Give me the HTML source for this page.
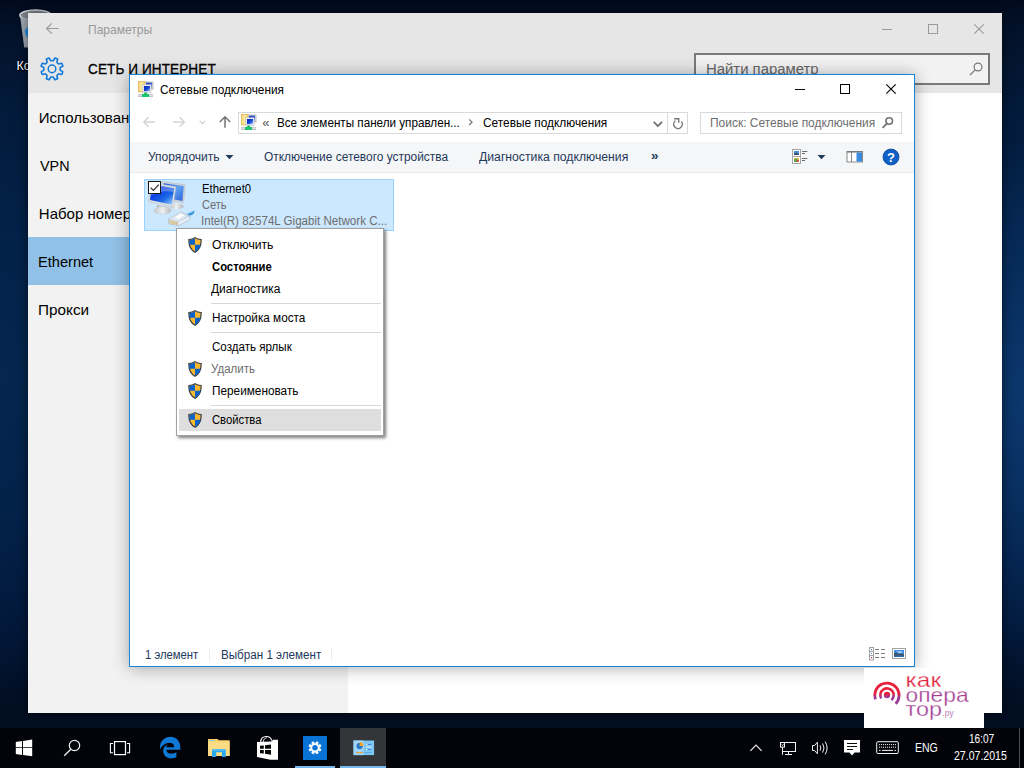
<!DOCTYPE html>
<html lang="ru">
<head>
<meta charset="utf-8">
<title>Сетевые подключения</title>
<style>
html,body{margin:0;padding:0;}
body{width:1024px;height:768px;overflow:hidden;position:relative;background:#071428;font-family:"Liberation Sans",sans-serif;color:#000;}
.abs{position:absolute;}
.abs,.t12,.navt,.mi,#sbox span{transform-origin:0 0;}
#desk{left:0;top:0;width:1024px;height:728px;background:radial-gradient(ellipse 160px 260px at 1024px 400px,rgba(18,70,135,.55),rgba(18,70,135,0) 100%),linear-gradient(180deg,#020b1d 0%,#03122a 4%,#031b3c 16%,#03224a 34%,#04264f 52%,#03224a 70%,#02183a 86%,#020e22 97%,#020e22 100%);}
/* settings window */
#set{left:28px;top:13px;width:974px;height:700px;background:#fff;box-shadow:0 1px 10px rgba(0,0,0,.55);}
#set .hdr{left:0;top:0;width:974px;height:80px;background:#e6e6e6;}
#set .nav{left:0;top:80px;width:320px;height:620px;background:#f2f2f2;}
#set .navsel{left:0;top:224px;width:320px;height:48px;background:#91c1e7;}
.navt{position:absolute;left:11px;font-size:15px;color:#000;white-space:nowrap;}
#set .ttl{left:60px;top:9px;font-size:13px;color:#999;}
#set .big{left:59px;top:47px;font-size:15.5px;color:#000;letter-spacing:0.1px;-webkit-text-stroke:0.3px #000;}
#sbox{left:666px;top:40px;width:292px;height:28px;border:2px solid #7a7a7a;background:#f2f2f2;}
#sbox span{position:absolute;left:9px;top:5px;font-size:15.5px;color:#666;}
/* explorer */
#exp{left:129px;top:74px;width:784px;height:591px;background:#fff;border:1px solid #1883d7;box-shadow:0 1px 16px rgba(0,0,0,.33);}
#exp .tb{left:0;top:67px;width:784px;height:30px;background:#f5f6f7;}
#exp .tbl{left:0;top:97px;width:784px;height:1px;background:#e8e9ea;}
.t12{position:absolute;font-size:12px;white-space:nowrap;}
#addr{left:108px;top:37px;width:448px;height:20px;border:1px solid #d9d9d9;background:#fff;}
#srch{left:570px;top:37px;width:200px;height:20px;border:1px solid #d9d9d9;background:#fff;}
#item{left:14px;top:104px;width:248px;height:50px;background:#cce8ff;border:1px solid #99d1ff;}
/* menu */
#menu{left:176px;top:228px;width:206px;height:206px;background:#fff;border:1px solid #a0a0a0;box-shadow:2px 2px 3px rgba(0,0,0,.5);}
#menu .mi{position:absolute;left:34px;font-size:12px;white-space:nowrap;}
#menu .sep{position:absolute;left:34px;width:170px;height:1px;background:#d7d7d7;}
#menu .hl{position:absolute;left:2px;top:180px;width:202px;height:22px;background:#dedede;}
/* taskbar */
.tray{font-size:12px;color:#fff;white-space:nowrap;transform-origin:0 0;}
#wm{left:864px;top:668px;width:120px;height:60px;background:#fff;}
#task{left:0;top:728px;width:1024px;height:40px;background:#030409;}
</style>
</head>
<body>

<svg width="0" height="0" style="position:absolute">
  <defs>
    <symbol id="shield" viewBox="0 0 14 16">
      <path d="M7 0.6 C5.2 1.9 3 2.4 0.9 2.5 C0.6 8 2.2 12.3 7 15.3 C11.8 12.3 13.4 8 13.1 2.5 C11 2.4 8.8 1.9 7 0.6 Z" fill="#fdb72d" stroke="#323843" stroke-width="1.15"/>
      <path d="M7 1.2 C5.3 2.3 3.3 2.8 1.4 2.95 L1.4 7.8 L7 7.8 Z" fill="#0b62c8"/>
      <path d="M7 7.8 L12.55 7.8 C12.1 10.7 10.3 13 7 14.7 Z" fill="#0b62c8"/>
    </symbol>
    <linearGradient id="scr" x1="0" y1="0" x2="1" y2="1">
      <stop offset="0" stop-color="#0a20c0"/><stop offset="0.55" stop-color="#1648d8"/><stop offset="1" stop-color="#a8d0f8"/>
    </linearGradient>
    <linearGradient id="fold" x1="0" y1="0" x2="1" y2="0">
      <stop offset="0" stop-color="#f3d57a"/><stop offset="0.5" stop-color="#fbe9a6"/><stop offset="1" stop-color="#e9c25a"/>
    </linearGradient>
    <symbol id="netc" viewBox="0 0 16 16">
      <rect x="0.3" y="0.3" width="7.2" height="10.6" fill="url(#fold)" stroke="#dcae45" stroke-width="0.7"/>
      <rect x="7" y="0.5" width="8.6" height="8.2" fill="#c9c9c9"/>
      <rect x="8" y="1.6" width="6" height="6" fill="url(#scr)" opacity="0.8"/>
      <rect x="4.8" y="3.8" width="8.2" height="8" fill="#ececec" stroke="#bdbdbd" stroke-width="0.5"/>
      <rect x="6" y="5" width="6" height="5.2" fill="url(#scr)"/>
      <rect x="0" y="13.2" width="15" height="2.8" fill="#d9dce2"/>
      <rect x="0" y="13.2" width="15" height="0.6" fill="#bcbcbc"/>
      <rect x="0" y="15.4" width="15" height="0.6" fill="#b3b3b3"/>
      <rect x="6.2" y="11.6" width="2.8" height="2" fill="#15b862"/>
      <rect x="4" y="13" width="7" height="3" fill="#1cc56c"/>
    </symbol>
  </defs>
</svg>
<div id="desk" class="abs"></div>


<svg class="abs" style="left:0;top:0" width="64" height="80" viewBox="0 0 64 80">
  <path d="M20 15.6 L24.2 47.4 L46 47.4 L50 15.6 Z" fill="#98a0aa"/>
  <ellipse cx="35.5" cy="15.2" rx="15.6" ry="5.2" fill="#7d838a" stroke="#cdd1d6" stroke-width="1.6"/>
  <path d="M21.2 18 L25 46.6 L28.4 46.6 L28.4 18.6 Z" fill="#a4abb5"/>
  <path d="M24.6 30.4 L28.2 26.2 V38 L25.8 35.4 Z" fill="#2c8fe0"/>
</svg>
<div class="abs" style="left:16.5px;top:59px;font-size:12.5px;color:#fff;text-shadow:0 1px 2px #000,1px 1px 1px #000;white-space:nowrap;">Корзина</div>

<div id="set" class="abs">
  <div class="hdr abs"></div>
  <div class="nav abs"></div>
  <div class="navsel abs"></div>
  <div class="ttl abs" style="left:59.57px;transform:scaleX(0.9256)">Параметры</div>
  <div class="big abs" style="left:59.6px;transform:scaleX(0.8756)">СЕТЬ И ИНТЕРНЕТ</div>
  <div id="sbox" class="abs"><span style="left:10px;transform:scaleX(0.9598)">Найти параметр</span></div>

  <svg class="abs" style="left:-28px;top:-13px" width="1024" height="768" viewBox="0 0 1024 768">
    <!-- back arrow -->
    <path d="M58.5 28.5 H46.8 M51.8 23.3 L46.6 28.5 L51.8 33.7" fill="none" stroke="#9a9a9a" stroke-width="1.2"/>
    <!-- gear -->
    <path d="M53.21 60.79 L54.92 57.99 L57.65 59.11 L56.88 62.31 L58.59 64.02 L61.79 63.25 L62.91 65.98 L60.11 67.69 L60.11 70.11 L62.91 71.82 L61.79 74.55 L58.59 73.78 L56.88 75.49 L57.65 78.69 L54.92 79.81 L53.21 77.01 L50.79 77.01 L49.08 79.81 L46.35 78.69 L47.12 75.49 L45.41 73.78 L42.21 74.55 L41.09 71.82 L43.89 70.11 L43.89 67.69 L41.09 65.98 L42.21 63.25 L45.41 64.02 L47.12 62.31 L46.35 59.11 L49.08 57.99 L50.79 60.79 Z" fill="none" stroke="#1079d9" stroke-width="1.6" stroke-linejoin="round"/>
    <circle cx="52" cy="68.9" r="3.8" fill="none" stroke="#1079d9" stroke-width="1.5"/>
    <!-- window controls -->
    <path d="M882 29.5 H892" stroke="#9a9a9a" stroke-width="1"/>
    <rect x="928.5" y="24.5" width="9" height="9" fill="none" stroke="#9a9a9a" stroke-width="1"/>
    <path d="M974.3 24.3 L983.7 33.7 M983.7 24.3 L974.3 33.7" stroke="#9a9a9a" stroke-width="1.1"/>
    <!-- search magnifier -->
    <circle cx="978" cy="67" r="3.9" fill="none" stroke="#777" stroke-width="1.2"/>
    <path d="M975.2 69.8 L970 75" stroke="#777" stroke-width="1.2"/>
  </svg>
  <div class="navt" style="left:10.8px;top:96px;transform:scaleX(1)">Использование данных</div>
  <div class="navt" style="left:11.9px;top:144px;transform:scaleX(0.9564)">VPN</div>
  <div class="navt" style="left:10.8px;top:192px;transform:scaleX(1)">Набор номера</div>
  <div class="navt" style="left:10.28px;top:240px;transform:scaleX(0.9728)">Ethernet</div>
  <div class="navt" style="left:10.22px;top:288px;transform:scaleX(1.02)">Прокси</div>
</div>

<div id="exp" class="abs">
  <div class="tb abs"></div><div class="tbl abs"></div>
  <div class="t12" style="left:30.0px;top:8px;transform:scaleX(0.9858)">Сетевые подключения</div>
  <div id="addr" class="abs">
    <div class="t12" style="left:23.2px;top:2px;font-size:13px;color:#555;">«</div>
    <div class="t12" style="left:37.75px;top:3px;transform:scaleX(0.9729)">Все элементы панели управлен...</div>
    <div class="t12" style="left:243.5px;top:3px;transform:scaleX(0.9878)">Сетевые подключения</div>
  </div>
  <div id="srch" class="abs"><div class="t12" style="left:8.6px;top:3px;color:#6d6d6d;transform:scaleX(0.997)">Поиск: Сетевые подключения</div></div>
  <div class="t12" style="left:18.4px;top:75px;color:#1e395b;transform:scaleX(1.002)">Упорядочить</div>
  <div class="t12" style="left:134.4px;top:75px;color:#1e395b;transform:scaleX(0.9927)">Отключение сетевого устройства</div>
  <div class="t12" style="left:348.75px;top:75px;color:#1e395b;transform:scaleX(1.0175)">Диагностика подключения</div>
  <div class="t12" style="left:521px;top:72.5px;color:#1e395b;font-size:13.5px;font-weight:bold;">»</div>
  <div id="item" class="abs"></div>
  <svg class="abs" style="left:-130px;top:-75px" width="1024" height="768" viewBox="0 0 1024 768">
    <!-- title icon -->
    <use href="#netc" x="138" y="81" width="16" height="16"/>
    <!-- window controls -->
    <path d="M795 89.5 H805" stroke="#000" stroke-width="1"/>
    <rect x="840.5" y="84.5" width="9" height="9" fill="none" stroke="#000" stroke-width="1"/>
    <path d="M886.3 84.3 L895.7 93.7 M895.7 84.3 L886.3 93.7" stroke="#000" stroke-width="1.1"/>
    <!-- nav arrows -->
    <path d="M155 122 H144 M148.6 117.2 L143.8 122 L148.6 126.8" fill="none" stroke="#d4d4d4" stroke-width="1.4"/>
    <path d="M173.2 122 H184.2 M179.6 117.2 L184.4 122 L179.6 126.8" fill="none" stroke="#d4d4d4" stroke-width="1.4"/>
    <path d="M199.6 120.9 L202.4 123.7 L205.2 120.9" fill="none" stroke="#cfcfcf" stroke-width="1.1"/>
    <path d="M225 127.8 V117 M219.8 122 L225 116.8 L230.2 122" fill="none" stroke="#737373" stroke-width="1.5"/>
    <!-- address icon -->
    <use href="#netc" x="241" y="114" width="16" height="16"/>
    <!-- address dropdown + refresh -->
    <path d="M653.8 121.9 L657.9 126 L662 121.9" fill="none" stroke="#6a6a6a" stroke-width="1.7"/>
    <path d="M667.5 113 V134" stroke="#d9d9d9" stroke-width="1"/>
    <path d="M675.5 120.7 A4.3 4.3 0 1 0 681.5 121.7" fill="none" stroke="#737373" stroke-width="1.4"/>
    <path d="M674.2 118.7 H678.7 V122.8" fill="none" stroke="#737373" stroke-width="1.4"/>
    <!-- search magnifier -->
    <circle cx="889.2" cy="121" r="3.3" fill="none" stroke="#737373" stroke-width="1.6"/>
    <path d="M886.8 123.6 L882.6 127.8" stroke="#737373" stroke-width="1.8"/>
    <!-- toolbar: dropdown arrow after Упорядочить -->
    <path d="M225.5 155 H233.5 L229.5 159.2 Z" fill="#1e395b"/>
    <!-- view icon -->
    <rect x="792.5" y="149.5" width="8" height="14" fill="#fff" stroke="#a5a5a5" stroke-width="1"/>
    <path d="M792.5 156.5 H800.5" stroke="#a5a5a5" stroke-width="1"/>
    <rect x="794" y="151" width="5" height="4" fill="#4a90e2"/>
    <path d="M794 155 V153.4 L796 152.6 L799 154 V155 Z" fill="#3b5168"/>
    <rect x="794" y="158" width="5" height="4" fill="#e8b34a"/>
    <path d="M794 162 V159.6 L796.4 158.6 L799 161 V162 Z" fill="#5aa84a"/>
    <rect x="796.6" y="160" width="2.4" height="2" fill="#d9534a"/>
    <path d="M802 151.5 H807.4 M802 153.5 H805 M802 158.5 H807.4 M802 160.5 H805" stroke="#6e6e6e" stroke-width="1"/>
    <path d="M817.5 155 H825.5 L821.5 159.2 Z" fill="#1e395b"/>
    <!-- preview pane icon -->
    <rect x="847" y="151.5" width="15.5" height="10.5" fill="#fff" stroke="#8a8a8a" stroke-width="1"/>
    <rect x="847" y="151" width="15.5" height="1.6" fill="#7a7a7a"/>
    <rect x="856.5" y="152.6" width="5.6" height="9" fill="#3a8be0"/>
    <path d="M851.5 152 V162" stroke="#8a8a8a" stroke-width="1"/>
    <!-- help -->
    <circle cx="891" cy="157" r="8" fill="#0f5fc4" stroke="#0a4a9e" stroke-width="0.8"/>
    <text x="891" y="161.6" font-family="Liberation Sans, sans-serif" font-weight="bold" font-size="13" fill="#fff" text-anchor="middle">?</text>
    <!-- breadcrumb chevron -->
    <path d="M469.2 119.4 L472 122.2 L469.2 125" fill="none" stroke="#7a7a7a" stroke-width="1.3"/>
    <!-- status bar view buttons -->
    <g fill="#fff" stroke="#a2a2a2" stroke-width="1">
      <rect x="869.5" y="647.5" width="4" height="4"/><rect x="869.5" y="651.5" width="4" height="4"/><rect x="869.5" y="655.5" width="4" height="4.5"/>
    </g>
    <rect x="871" y="649" width="1" height="1" fill="#46567a"/><rect x="871" y="653" width="1" height="1" fill="#4a90f0"/><rect x="871" y="657" width="1.2" height="1.2" fill="#e0203a"/>
    <path d="M875 649.5 H879 M881 649.5 H885 M875 653.5 H879 M881 653.5 H885 M875 657.5 H879 M881 657.5 H885" stroke="#7a7a7a" stroke-width="1"/>
    <rect x="892.5" y="648.5" width="13" height="10" fill="#fff" stroke="#a2a2a2" stroke-width="1"/>
    <rect x="894" y="650" width="10" height="7" fill="#3f8fe6"/>
    <path d="M894 657 V653 L896.5 652.4 L899 654 L902 653.2 L904 654.4 V657 Z" fill="#3c566e"/>
    <path d="M894 657 V655.6 H904 V657 Z" fill="#2d6fae"/>
    <path d="M896 651.6 H902 V652.8 H899 Z" fill="#d7e8f8"/>
    <!-- big network icon -->
    <defs>
      <linearGradient id="bscr" x1="0" y1="0" x2="0.9" y2="1">
        <stop offset="0" stop-color="#2a7ae8"/><stop offset="0.35" stop-color="#0a3ee0"/><stop offset="0.7" stop-color="#1d6ae6"/><stop offset="1" stop-color="#9cc8f6"/>
      </linearGradient>
      <linearGradient id="bscr2" x1="0" y1="0" x2="1" y2="1">
        <stop offset="0" stop-color="#1d5be0"/><stop offset="0.5" stop-color="#5fa0ee"/><stop offset="1" stop-color="#2a62dc"/>
      </linearGradient>
      <linearGradient id="bbase" x1="0" y1="0" x2="1" y2="0">
        <stop offset="0" stop-color="#c4c8cc"/><stop offset="0.5" stop-color="#eceeef"/><stop offset="1" stop-color="#b4b8bc"/>
      </linearGradient>
    </defs>
    <!-- back monitor -->
    <ellipse cx="176.5" cy="206.3" rx="7" ry="3" fill="url(#bbase)"/>
    <path d="M162.2 181.6 L185.2 184.8 L183.6 202.8 L160.8 198.6 Z" fill="#d2d5d8" stroke="#b9bdc1" stroke-width="0.6"/>
    <path d="M163.6 183.2 L183.8 186 L182.4 201 L162.6 197.2 Z" fill="url(#bscr2)"/>
    <!-- front monitor -->
    <path d="M157 205 L168 207 L168.5 210 L157 209 Z" fill="#b9bdc2"/>
    <ellipse cx="162.6" cy="210.4" rx="8.6" ry="3.9" fill="url(#bbase)" stroke="#c0c4c8" stroke-width="0.4"/>
    <path d="M150.4 182.4 L175.8 186.8 L173 207 L148.4 201.6 Z" fill="#dfe2e5" stroke="#bfc3c7" stroke-width="0.6"/>
    <path d="M151.8 184.2 L174.2 188.2 L171.8 204.8 L150 200 Z" fill="url(#bscr)"/>
    <path d="M151.8 184.2 L174.2 188.2 L173.6 192 C166 190 158 192 150.6 195.6 Z" fill="#fff" opacity="0.28"/>
    <!-- rj45 -->
    <path d="M183.6 216.2 L190 212.6 L194.6 210.6 L193.8 213.8 L186 218 Z" fill="#3a97dc"/>
    <path d="M187 214 L193.6 211.2" stroke="#8fd0f6" stroke-width="1"/>
    <path d="M168.6 219 L180.6 211.6 L190 216 L189.6 220 L178.2 225.8 L168.8 223.6 Z" fill="#e6eef7" fill-opacity="0.9" stroke="#a9b4c0" stroke-width="0.6"/>
    <path d="M168.6 219 L178 221.4 L178.2 225.8 L168.8 223.6 Z" fill="#dfe6ee" stroke="#a9b4c0" stroke-width="0.5"/>
    <path d="M178 221.4 L190 216" stroke="#a9b4c0" stroke-width="0.5"/>
    <path d="M170.2 220.4 V223.2 M171.8 220.8 V223.6 M173.4 221.2 V224 M175 221.6 V224.4 M176.6 222 V224.8" stroke="#d8a53a" stroke-width="0.8"/>
    <path d="M173.6 217.4 L181 213.4 L185.4 215.4 L178.4 219.2 Z" fill="#fff" stroke="#b9c3ce" stroke-width="0.4"/>
    <!-- checkbox -->
    <rect x="148.5" y="181.5" width="12" height="12" fill="#fff" stroke="#1a1a1a" stroke-width="1"/>
    <path d="M150.6 187.6 L153.4 190.4 L158.8 184.6" fill="none" stroke="#2b2b2b" stroke-width="1.2"/>
    <!-- status separators -->
    <path d="M209.5 649 V661 M331.5 649 V661" stroke="#ececec" stroke-width="1"/>
  </svg>

  <div class="t12" style="left:71.6px;top:107px;transform:scaleX(0.9434)">Ethernet0</div>
  <div class="t12" style="left:71.6px;top:123px;color:#6d6d6d;transform:scaleX(0.9229)">Сеть</div>
  <div class="t12" style="left:70.64px;top:139px;color:#6d6d6d;transform:scaleX(0.9647)">Intel(R) 82574L Gigabit Network C...</div>
  <div class="t12" style="left:15.0px;top:573px;color:#1e395b;transform:scaleX(0.9414)">1 элемент</div>
  <div class="t12" style="left:90.5px;top:573px;color:#1e395b;transform:scaleX(0.9696)">Выбран 1 элемент</div>
</div>

<div id="menu" class="abs">
  <div class="hl"></div>
  <svg class="abs" style="left:11px;top:8px" width="14" height="16"><use href="#shield"/></svg>
  <svg class="abs" style="left:11px;top:81px" width="14" height="16"><use href="#shield"/></svg>
  <svg class="abs" style="left:11px;top:132px" width="14" height="16"><use href="#shield"/></svg>
  <svg class="abs" style="left:11px;top:154px" width="14" height="16"><use href="#shield"/></svg>
  <svg class="abs" style="left:11px;top:183px" width="14" height="16"><use href="#shield"/></svg>
  
  <div class="mi" style="left:34.5px;top:9px;transform:scaleX(1.0132)">Отключить</div>
  <div class="mi" style="left:34.5px;top:31px;font-weight:bold;transform:scaleX(0.9386)">Состояние</div>
  <div class="mi" style="left:34.0px;top:53px;transform:scaleX(0.9972)">Диагностика</div>
  <div class="sep" style="top:74px"></div>
  <div class="mi" style="left:34.5px;top:82px;transform:scaleX(0.9792)">Настройка моста</div>
  <div class="sep" style="top:103px"></div>
  <div class="mi" style="left:34.5px;top:111px;transform:scaleX(0.9661)">Создать ярлык</div>
  <div class="mi" style="left:34.0px;top:133px;color:#6d6d6d;transform:scaleX(0.9591)">Удалить</div>
  <div class="mi" style="left:34.5px;top:155px;transform:scaleX(0.9827)">Переименовать</div>
  <div class="sep" style="top:176px"></div>
  <div class="mi" style="left:34.5px;top:184px;transform:scaleX(0.9374)">Свойства</div>
</div>


<div id="wm" class="abs"></div>
<svg class="abs" style="left:0;top:0" width="1024" height="768" viewBox="0 0 1024 768">
  <defs>
    <linearGradient id="wmg" x1="0" y1="682" x2="0" y2="706" gradientUnits="userSpaceOnUse">
      <stop offset="0" stop-color="#e8213a"/><stop offset="0.5" stop-color="#e2233f"/><stop offset="0.62" stop-color="#a23a93"/><stop offset="1" stop-color="#9a3a98"/>
    </linearGradient>
  </defs>
  <circle cx="887" cy="695" r="3.2" fill="url(#wmg)"/>
  <path d="M881.2 698.4 A6.7 6.7 0 1 1 891.4 700.1" fill="none" stroke="url(#wmg)" stroke-width="2.6"/>
  <path d="M875.4 699.4 A12.2 12.2 0 1 1 895.6 703.8" fill="none" stroke="url(#wmg)" stroke-width="2.8"/>
  <g font-family="Liberation Sans, sans-serif" stroke="#fff" stroke-width="0.3" paint-order="fill">
    <text x="905.6" y="687.4" font-size="21" fill="#e3223d" textLength="35.5" lengthAdjust="spacingAndGlyphs">как</text>
    <text x="905.6" y="702" font-size="21" fill="#a23c92" textLength="63" lengthAdjust="spacingAndGlyphs">опера</text>
    <text x="905.6" y="716.3" font-size="21" fill="#a23c92" textLength="36.5" lengthAdjust="spacingAndGlyphs">тор</text>
    <text x="942.4" y="716.3" font-size="8.5" fill="#a23c92" stroke-width="0.2">.ру</text>
  </g>
</svg>
<div id="task" class="abs"></div>
<svg class="abs" style="left:0;top:0" width="1024" height="768" viewBox="0 0 1024 768">
  <rect x="340" y="728" width="46" height="40" fill="#343538"/>
  <rect x="295" y="766" width="40" height="2" fill="#77b8ec"/>
  <rect x="340" y="766" width="46" height="2" fill="#77b8ec"/>
  <!-- start -->
  <path d="M15.8 741.9 L22 741 V747.2 H15.8 Z M23 740.9 L32.2 739.6 V747.2 H23 Z M15.8 748.1 H22 V754.9 L15.8 754 Z M23 748.1 H32.2 V756.2 L23 755 Z" fill="#fff"/>
  <!-- search -->
  <circle cx="74.5" cy="745.5" r="5.2" fill="none" stroke="#f0f0f0" stroke-width="1.2"/>
  <path d="M70.8 749.2 L64.2 755.8" stroke="#f0f0f0" stroke-width="1.3"/>
  <!-- task view -->
  <rect x="114.5" y="741.6" width="11" height="13" fill="none" stroke="#fff" stroke-width="1.2"/>
  <path d="M113 743.5 H110.4 V752.7 H113 M127 743.5 H129.6 V752.7 H127" fill="none" stroke="#fff" stroke-width="1.1"/>
  <!-- edge -->
  <g transform="translate(159.6,736.8) scale(0.9)"><path d="M.481 10.004c.354-2.855 1.89-5.87 4.653-7.732C7.014 1.014 9.28.002 12.046.002c3.74 0 6.36 1.478 8.296 3.828 1.79 2.183 2.66 5.127 2.66 7.995v2.55H7.59c.07 5.28 7.77 5.1 11.083 2.78v5.167c-1.941 1.165-6.343 2.205-9.755.864-2.907-1.09-4.977-4.136-4.967-7.03-.095-3.755 1.867-6.24 4.967-7.68-.66.819-1.16 1.71-1.42 3.25h8.68s.508-5.186-4.912-5.186c-5.11.176-8.79 3.148-10.785 7.464z" fill="#0f7ad6"/></g>
  <!-- explorer folder -->
  <path d="M208 739 H217.6 L218.8 740.2 H229.6 V756 H208 Z" fill="#f7cf5f"/>
  <path d="M208 741.4 H229.6 V756 H208 Z" fill="#fbdc85"/>
  <path d="M209.2 740 H214.6 V741 H209.2 Z" fill="#7fd0f5"/>
  <path d="M212 756.9 V750.4 Q212 749 213.4 749 H224.4 Q225.8 749 225.8 750.4 V756.9 H222 V752.2 H216.2 V756.9 Z" fill="#2aa9ee"/>
  <path d="M212 756.9 V750.4 Q212 749 213.4 749 H224.4 Q225.8 749 225.8 750.4 V751 H212 Z" fill="#4fbdf5"/>
  <!-- store -->
  <path d="M260.6 742.4 C260.8 738.4 263.4 736.5 266.4 736.5 C269 736.5 271.2 738 271.6 740.6" fill="none" stroke="#fff" stroke-width="1.1"/>
  <path d="M263.2 742 C263.4 739.4 264.8 738 266.8 737.8" fill="none" stroke="#fff" stroke-width="0.9"/>
  <path d="M257 742 L271.4 741.6 L273 739.7 H278 V759.7 H270.4 L257 757 Z" fill="#fff"/>
  <path d="M260 745.8 L263.8 745.4 V748.8 H260 Z M265 745.2 L271 744.5 V748.8 H265 Z M260 750 H263.8 V753.6 L260 753.2 Z M265 750 H271 V754.7 L265 753.8 Z" fill="#050505"/>
  <!-- settings -->
  <rect x="303" y="736" width="24" height="24" fill="#0a74d6"/>
  <path d="M315.65 743.45 L316.45 741.77 L318.24 742.51 L317.62 744.26 L318.54 745.18 L320.29 744.56 L321.03 746.35 L319.35 747.15 L319.35 748.45 L321.03 749.25 L320.29 751.04 L318.54 750.42 L317.62 751.34 L318.24 753.09 L316.45 753.83 L315.65 752.15 L314.35 752.15 L313.55 753.83 L311.76 753.09 L312.38 751.34 L311.46 750.42 L309.71 751.04 L308.97 749.25 L310.65 748.45 L310.65 747.15 L308.97 746.35 L309.71 744.56 L311.46 745.18 L312.38 744.26 L311.76 742.51 L313.55 741.77 L314.35 743.45 Z" fill="#fff" stroke="#fff" stroke-width="0.8" stroke-linejoin="round"/>
  <circle cx="315" cy="747.8" r="2.7" fill="#0a74d6"/>
  <!-- control panel -->
  <rect x="353.5" y="740.5" width="20.6" height="14.6" fill="#7cc6f3"/>
  <rect x="353.5" y="740.5" width="10" height="14.6" fill="#9ad4f7"/>
  <circle cx="359.6" cy="746" r="3.9" fill="#2a7bd0" stroke="#e9f4fc" stroke-width="0.8"/>
  <path d="M359.6 746 V742.1 A3.9 3.9 0 0 1 363.5 746 Z" fill="#f0a42a"/>
  <path d="M366 744.5 H371.5 M366 747 H371.5 M366 749.5 H371.5" stroke="#e8f4fd" stroke-width="1.2"/>
  <path d="M367.5 744.5 H371.5 M367.5 749.5 H371.5" stroke="#3b86d8" stroke-width="1.2"/>
  <path d="M356 752.6 H363" stroke="#e9a033" stroke-width="1.1"/>
  <path d="M364 752.6 H371.5" stroke="#5b9bd8" stroke-width="0.8"/>
  <!-- tray chevron -->
  <path d="M750.4 750.8 L756 745 L761.6 750.8" fill="none" stroke="#e8e8e8" stroke-width="1.2"/>
  <!-- network -->
  <g fill="none" stroke="#f2f2f2" stroke-width="1">
    <rect x="782.5" y="742.5" width="13" height="9"/>
    <rect x="780.5" y="742.5" width="4" height="4.6" fill="#0b0b0b"/>
    <path d="M782.5 747 V754.8 M788.5 751.5 V754.4 M785 754.5 H792"/>
    <path d="M781.6 744.4 L782.6 745.6 L783.8 743.8" stroke-width="0.7"/>
  </g>
  <!-- volume -->
  <g fill="none" stroke="#f2f2f2" stroke-width="1">
    <path d="M812.5 745.5 H814.6 L817.4 742.2 V753.8 L814.6 750.5 H812.5 Z"/>
    <path d="M820 745.4 Q821.6 748 820 750.6"/>
    <path d="M822.6 743.4 Q825.4 748 822.6 752.6"/>
    <path d="M825.2 741.6 Q829 748 825.2 754.4"/>
  </g>
  <!-- action center -->
  <path d="M844 740 H860 V752.4 H854.6 L852 755.6 L849.4 752.4 H844 Z" fill="#fff"/>
  <path d="M847 743.5 H857 M847 746.5 H857 M847 749.5 H853" stroke="#0b0b0b" stroke-width="1.1"/>
  <!-- keyboard -->
  <rect x="876.7" y="741.7" width="21.6" height="11.8" rx="1.2" fill="none" stroke="#f2f2f2" stroke-width="1"/>
  <path d="M879 744.6 H896 M879 747.2 H896" stroke="#f2f2f2" stroke-width="1" stroke-dasharray="1.1 0.9"/>
  <path d="M879 750.4 H880.6 M882 750.4 H893 M894.4 750.4 H896" stroke="#f2f2f2" stroke-width="1"/>
  <!-- show desktop sep -->
  <path d="M1019.5 728 V768" stroke="#4d4d4d" stroke-width="1"/>
</svg>
<div class="abs tray" style="left:914.5px;top:740.5px;transform:scaleX(0.8765)">ENG</div>
<div class="abs tray" style="left:969.0px;top:731.5px;transform:scaleX(0.84)">16:07</div>
<div class="abs tray" style="left:954.3px;top:749px;transform:scaleX(0.8794)">27.07.2015</div>

</body>
</html>
